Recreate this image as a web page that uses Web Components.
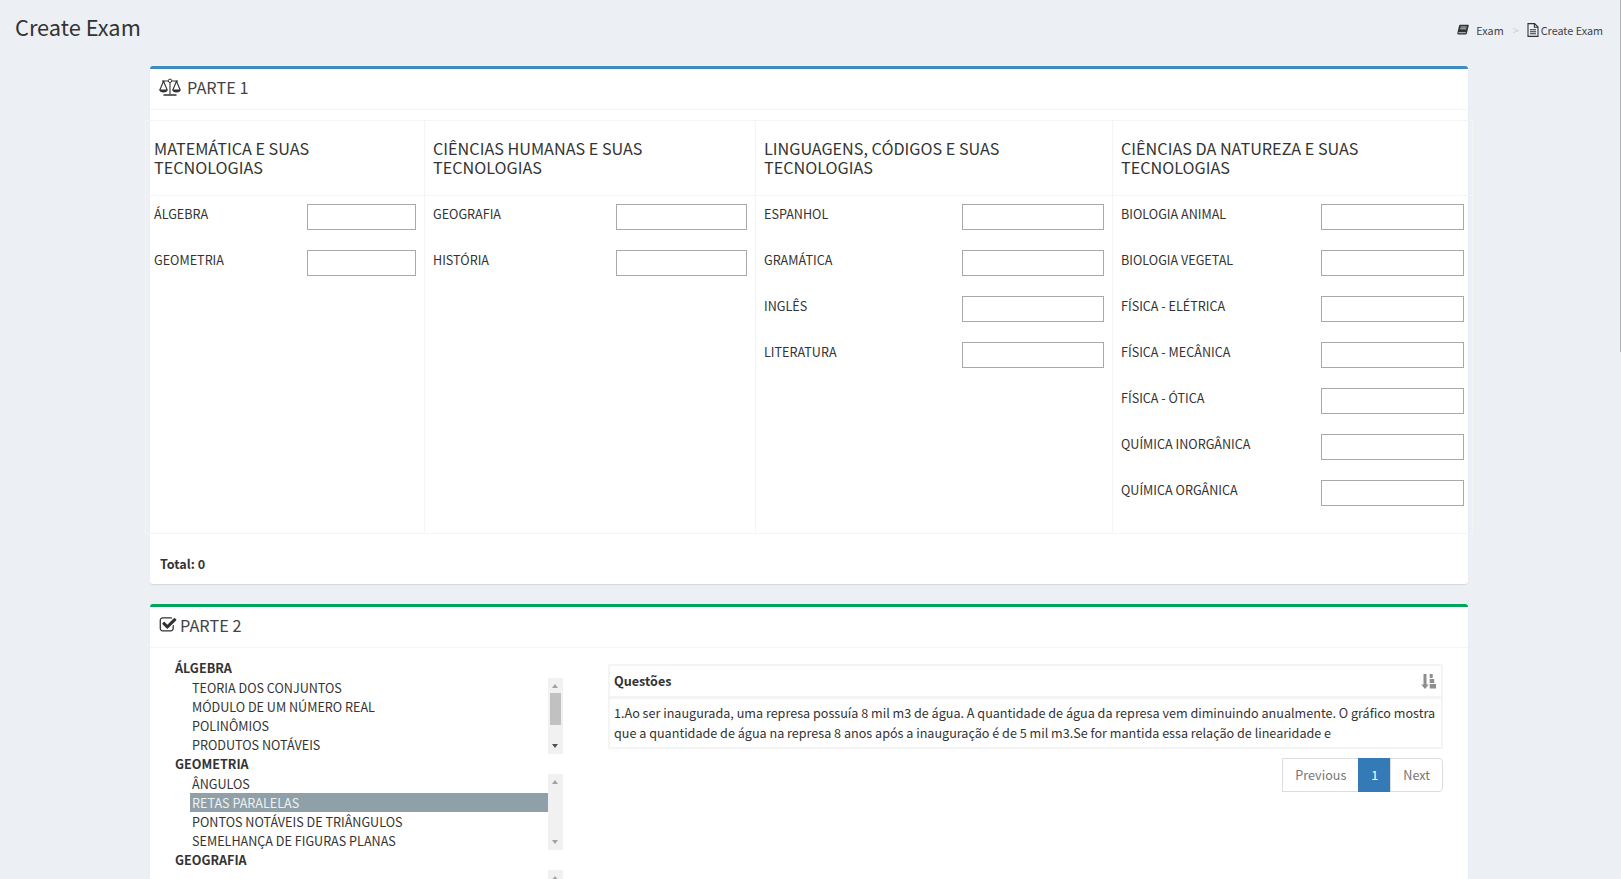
<!DOCTYPE html>
<html lang="pt">
<head>
<meta charset="utf-8">
<title>Create Exam</title>
<style>
  html, body { margin: 0; height: 100%; overflow: hidden; }
  body { background: #ecf0f5; color: #333; font: 12.6px/20px "Noto Sans CJK SC", "Source Sans Pro", "Noto Sans", sans-serif; }
</style>
</head>
<body>
<exam-page>
  <page-header slot="header" heading="Create Exam">
    <svg slot="book" width="12" height="12" viewBox="0 0 12 12"><path fill="#333" d="M3 .8h8.200c.5 0 .7.400.6.800L9.900 9.300c-.2.800-.7 1.200-1.500 1.200H1.600c-.9 0-1.500-.7-1.200-1.800L2 1.900C2.200 1.200 2.500.8 3 .8z"/><path fill="none" stroke="#ecf0f5" stroke-width=".8" d="M3.600 3h6M3.200 4.800h6M1.400 8.700h7.400"/></svg>
    <svg slot="file" width="12" height="14" viewBox="0 0 12 14"><path fill="none" stroke="#333" stroke-width="1.100" d="M1 .6h6.600L11 4v9.400H1zM7.400.8v3.400h3.400"/><path stroke="#333" stroke-width="1.100" d="M3 6.700h6M3 8.700h6M3 10.700h6"/></svg>
  </page-header>

  <exam-box color="#3c8dbc" heading="PARTE 1">
    <svg slot="icon" width="22" height="18" viewBox="0 0 22 18" style="margin:0 6px 0 -1px"><g fill="none" stroke="#333" stroke-width="1.100"><path d="M11 1v15.500M3 3h6M13 3h6M.8 12 4.500 3.200 8.200 12M13.800 12l3.700-8.800 3.700 8.800"/></g><circle cx="11" cy="2.800" r="1.700" fill="#fff" stroke="#333"/><path fill="#333" d="M.2 11.600h8.600c0 1.800-1.900 3-4.300 3s-4.300-1.200-4.300-3zM13.200 11.600h8.600c0 1.800-1.900 3-4.300 3s-4.300-1.200-4.300-3zM4.500 16.200h13v1.500h-13z"/></svg>
    <subject-grid>
      <subject-column heading="MATEMÁTICA E SUAS TECNOLOGIAS" style="--col-w:279px;--input-w:109px">
        <subject-field>ÁLGEBRA</subject-field>
        <subject-field>GEOMETRIA</subject-field>
      </subject-column>
      <subject-column heading="CIÊNCIAS HUMANAS E SUAS TECNOLOGIAS" style="--col-w:331px;--input-w:131px">
        <subject-field>GEOGRAFIA</subject-field>
        <subject-field>HISTÓRIA</subject-field>
      </subject-column>
      <subject-column heading="LINGUAGENS, CÓDIGOS E SUAS TECNOLOGIAS" style="--col-w:357px;--input-w:142px">
        <subject-field>ESPANHOL</subject-field>
        <subject-field>GRAMÁTICA</subject-field>
        <subject-field>INGLÊS</subject-field>
        <subject-field>LITERATURA</subject-field>
      </subject-column>
      <subject-column heading="CIÊNCIAS DA NATUREZA E SUAS TECNOLOGIAS" style="--col-w:361px;--input-w:143px">
        <subject-field>BIOLOGIA ANIMAL</subject-field>
        <subject-field>BIOLOGIA VEGETAL</subject-field>
        <subject-field>FÍSICA - ELÉTRICA</subject-field>
        <subject-field>FÍSICA - MECÂNICA</subject-field>
        <subject-field>FÍSICA - ÓTICA</subject-field>
        <subject-field>QUÍMICA INORGÂNICA</subject-field>
        <subject-field>QUÍMICA ORGÂNICA</subject-field>
      </subject-column>
    </subject-grid>
    <total-line value="0"></total-line>
  </exam-box>

  <exam-box color="#00a65a" heading="PARTE 2">
    <svg slot="icon" width="18" height="18" viewBox="0 0 1792 1792" style="margin:0 3px 0 -1px"><path fill="#333" d="M1472 930v318q0 119-84.500 203.500t-203.500 84.500h-832q-119 0-203.500-84.500t-84.500-203.500v-832q0-119 84.500-203.500t203.500-84.500h832q63 0 117 25 15 7 18 23 3 17-9 29l-49 49q-10 10-23 10-3 0-9-2-23-6-45-6h-832q-66 0-113 47t-47 113v832q0 66 47 113t113 47h832q66 0 113-47t47-113v-254q0-13 9-22l64-64q10-10 23-10 6 0 12 3 20 8 20 29zm231-489l-814 814q-24 24-57 24t-57-24l-430-430q-24-24-24-57t24-57l110-110q24-24 57-24t57 24l263 263 647-647q24-24 57-24t57 24l110 110q24 24 24 57t-24 57z"/></svg>
    <part-two>
      <div slot="tree">
        <topic-group heading="ÁLGEBRA" thumb-top="15" thumb-height="32">
          <topic-item>TEORIA DOS CONJUNTOS</topic-item>
          <topic-item>MÓDULO DE UM NÚMERO REAL</topic-item>
          <topic-item>POLINÔMIOS</topic-item>
          <topic-item>PRODUTOS NOTÁVEIS</topic-item>
        </topic-group>
        <topic-group heading="GEOMETRIA">
          <topic-item>ÂNGULOS</topic-item>
          <topic-item selected>RETAS PARALELAS</topic-item>
          <topic-item>PONTOS NOTÁVEIS DE TRIÂNGULOS</topic-item>
          <topic-item>SEMELHANÇA DE FIGURAS PLANAS</topic-item>
        </topic-group>
        <topic-group heading="GEOGRAFIA"></topic-group>
      </div>
      <question-panel slot="questions" heading="Questões">
        1.Ao ser inaugurada, uma represa possuía 8 mil m3 de água. A quantidade de água da represa vem diminuindo anualmente. O gráfico mostra que a quantidade de água na represa 8 anos após a inauguração é de 5 mil m3.Se for mantida essa relação de linearidade e
      </question-panel>
      <page-nav slot="questions"></page-nav>
    </part-two>
  </exam-box>
</exam-page>

<script>
class ExamPage extends HTMLElement {
  constructor() {
    super();
    this.attachShadow({ mode: "open" });
    this.shadowRoot.innerHTML = `
      <style>
        :host { display: block; height: 879px; overflow: hidden; position: relative; }
        main { display: flex; flex-direction: column; gap: 20px; padding: 0 153px 0 150px; }
        /* page scrollbar, only its last pixel is on screen */
        .thumb { position: absolute; top: 0; right: 0; width: 1px; height: 352px; background: #b4b4b4; }
      </style>
      <slot name="header"></slot>
      <main><slot></slot></main>
      <div class="thumb"></div>
    `;
  }
}

class PageHeader extends HTMLElement {
  constructor() {
    super();
    this.attachShadow({ mode: "open" });
    this.shadowRoot.innerHTML = `
      <style>
        :host { display: flex; justify-content: space-between; height: 66px; padding: 0 18px 0 15px; box-sizing: border-box; }
        h1 { margin: 12px 0 0; font-size: 21.800px; font-weight: 400; line-height: 29px; }
        nav { display: flex; align-items: center; height: 20px; margin-top: 20px; font-size: 10.800px; color: #444; }
        .gt { margin: 0 8px 0 9px; color: #ccc; }
        .exam { margin-left: 7px; }
        ::slotted(svg) { display: block; }
        .file { margin-right: 2px; display: flex; }
      </style>
      <h1>${this.getAttribute("heading")}</h1>
      <nav>
        <slot name="book"></slot><span class="exam">Exam</span><span class="gt">&gt;</span>
        <span class="file"><slot name="file"></slot></span><span>Create Exam</span>
      </nav>
    `;
  }
}

class ExamBox extends HTMLElement {
  constructor() {
    super();
    this.attachShadow({ mode: "open" });
    this.shadowRoot.innerHTML = `
      <style>
        :host { display: block; background: #fff; border-top: 3px solid ${this.getAttribute("color")}; border-radius: 3px; box-shadow: 0 1px 1px rgba(0,0,0,.1); }
        header { display: flex; align-items: center; height: 41px; padding: 0 10px 4px; box-sizing: border-box; border-bottom: 1px solid #f4f4f4; font-size: 16.300px; color: #444; }
        .body { padding: 10px; }
      </style>
      <header><slot name="icon"></slot><span>${this.getAttribute("heading")}</span></header>
      <div class="body"><slot></slot></div>
    `;
  }
}

class SubjectGrid extends HTMLElement {
  constructor() {
    super();
    this.attachShadow({ mode: "open" });
    this.shadowRoot.innerHTML = `
      <style>
        :host { display: flex; margin: 0 -15px; border: 1px solid #f4f4f4; border-width: 1px 0; }
      </style>
      <slot></slot>
    `;
  }
}

class SubjectColumn extends HTMLElement {
  constructor() {
    super();
    this.attachShadow({ mode: "open" });
    this.shadowRoot.innerHTML = `
      <style>
        :host { display: block; width: var(--col-w); box-sizing: border-box; border-left: 1px solid #f4f4f4; }
        :host(:last-child) { border-right: 1px solid #f4f4f4; }
        h4 { margin: 0; height: 75px; box-sizing: border-box; padding: 18px 60px 0 8px; border-bottom: 1px solid #f4f4f4; font-size: 16.200px; font-weight: 400; line-height: 19px; }
        .fields { padding: 8px 8px 7px; min-height: 322px; }
      </style>
      <h4>${this.getAttribute("heading")}</h4>
      <div class="fields"><slot></slot></div>
    `;
  }
}

class SubjectField extends HTMLElement {
  constructor() {
    super();
    this.attachShadow({ mode: "open" });
    this.shadowRoot.innerHTML = `
      <style>
        :host { display: flex; justify-content: space-between; height: 46px; }
        input { width: var(--input-w); height: 26px; box-sizing: border-box; margin: 0; padding: 0 4px; border: 1px solid #a9a9a9; background: #fff; font: inherit; }
      </style>
      <label><slot></slot></label>
      <input type="text">
    `;
  }
}

class TotalLine extends HTMLElement {
  constructor() {
    super();
    this.attachShadow({ mode: "open" });
    this.shadowRoot.innerHTML = `
      <style>
        :host { display: block; box-sizing: border-box; padding: 20px 0 0; height: 40px; font-weight: 700; }
      </style>
      Total: ${this.getAttribute("value")}
    `;
  }
}

class PartTwo extends HTMLElement {
  constructor() {
    super();
    this.attachShadow({ mode: "open" });
    this.shadowRoot.innerHTML = `
      <style>
        :host { display: flex; }
        .tree { width: 388px; padding-left: 15px; flex: none; }
        .questions { width: 835px; margin-left: 45px; margin-top: 6px; flex: none; }
      </style>
      <div class="tree"><slot name="tree"></slot></div>
      <div class="questions"><slot name="questions"></slot></div>
    `;
  }
}

class TopicGroup extends HTMLElement {
  constructor() {
    super();
    this.attachShadow({ mode: "open" });
    const top = this.getAttribute("thumb-top");
    const height = this.getAttribute("thumb-height");
    const thumb = top ? `<i class="thumb" style="top:${top}px;height:${height}px"></i>` : "";
    this.shadowRoot.innerHTML = `
      <style>
        :host { display: block; }
        b { display: block; height: 20px; line-height: 20px; font-weight: 700; }
        .list { display: flex; height: 76px; margin-left: 15px; }
        .items { flex: 1; min-width: 0; }
        .bar { width: 15px; background: #f1f1f1; position: relative; }
        .thumb { position: absolute; left: 2px; right: 2px; background: #c1c1c1; }
        .up, .down { position: absolute; left: 4px; width: 0; border: 3.500px solid transparent; }
        .up { top: 6px; border-bottom: 4px solid #a3a3a3; border-top-width: 0; }
        .down { bottom: 6px; border-top: 4px solid ${top ? "#505050" : "#a3a3a3"}; border-bottom-width: 0; }
      </style>
      <b>${this.getAttribute("heading")}</b>
      <div class="list">
        <div class="items"><slot></slot></div>
        <div class="bar"><i class="up"></i>${thumb}<i class="down"></i></div>
      </div>
    `;
  }
}

class TopicItem extends HTMLElement {
  constructor() {
    super();
    this.attachShadow({ mode: "open" });
    this.shadowRoot.innerHTML = `
      <style>
        :host { display: block; height: 19px; line-height: 19px; padding: 0 2px; }
        :host([selected]) { background: #8fa0a8; color: #eef1f2; }
      </style>
      <slot></slot>
    `;
  }
}

class QuestionPanel extends HTMLElement {
  constructor() {
    super();
    this.attachShadow({ mode: "open" });
    this.shadowRoot.innerHTML = `
      <style>
        :host { display: block; border: 2px solid #f4f4f4; border-radius: 2px; }
        header { display: flex; justify-content: space-between; align-items: center; height: 30px; padding: 0 5px 0 4px; border-bottom: 3px solid #f4f4f4; font-weight: 700; }
        .text { padding: 4px 4px 4px; line-height: 20px; }
        svg { display: block; }
      </style>
      <header>
        <span>${this.getAttribute("heading")}</span>
        <svg width="15" height="15" viewBox="0 0 15 15" fill="#8e8e8e"><path d="M2.500 0h3v10.500h2.300L4 15 .2 10.500h2.300zM8.700 0h3v4h-3zM8.700 5h4.500v4H8.700zM8.700 10H15v4.500H8.700z"/></svg>
      </header>
      <div class="text"><slot></slot></div>
    `;
  }
}

class PageNav extends HTMLElement {
  constructor() {
    super();
    this.attachShadow({ mode: "open" });
    this.shadowRoot.innerHTML = `
      <style>
        :host { display: flex; justify-content: flex-end; margin-top: 9px; }
        a { display: block; height: 34px; box-sizing: border-box; padding: 6px 12px; border: 1px solid #ddd; margin-left: -1px; color: #777; background: #fff; line-height: 20px; }
        a:first-child { border-radius: 4px 0 0 4px; }
        a:last-child { border-radius: 0 4px 4px 0; }
        a.active { background: #337ab7; border-color: #337ab7; color: #fff; }
      </style>
      <a>Previous</a><a class="active">1</a><a>Next</a>
    `;
  }
}

customElements.define("exam-page", ExamPage);
customElements.define("page-header", PageHeader);
customElements.define("exam-box", ExamBox);
customElements.define("subject-grid", SubjectGrid);
customElements.define("subject-column", SubjectColumn);
customElements.define("subject-field", SubjectField);
customElements.define("total-line", TotalLine);
customElements.define("part-two", PartTwo);
customElements.define("topic-group", TopicGroup);
customElements.define("topic-item", TopicItem);
customElements.define("question-panel", QuestionPanel);
customElements.define("page-nav", PageNav);
</script>
</body>
</html>
